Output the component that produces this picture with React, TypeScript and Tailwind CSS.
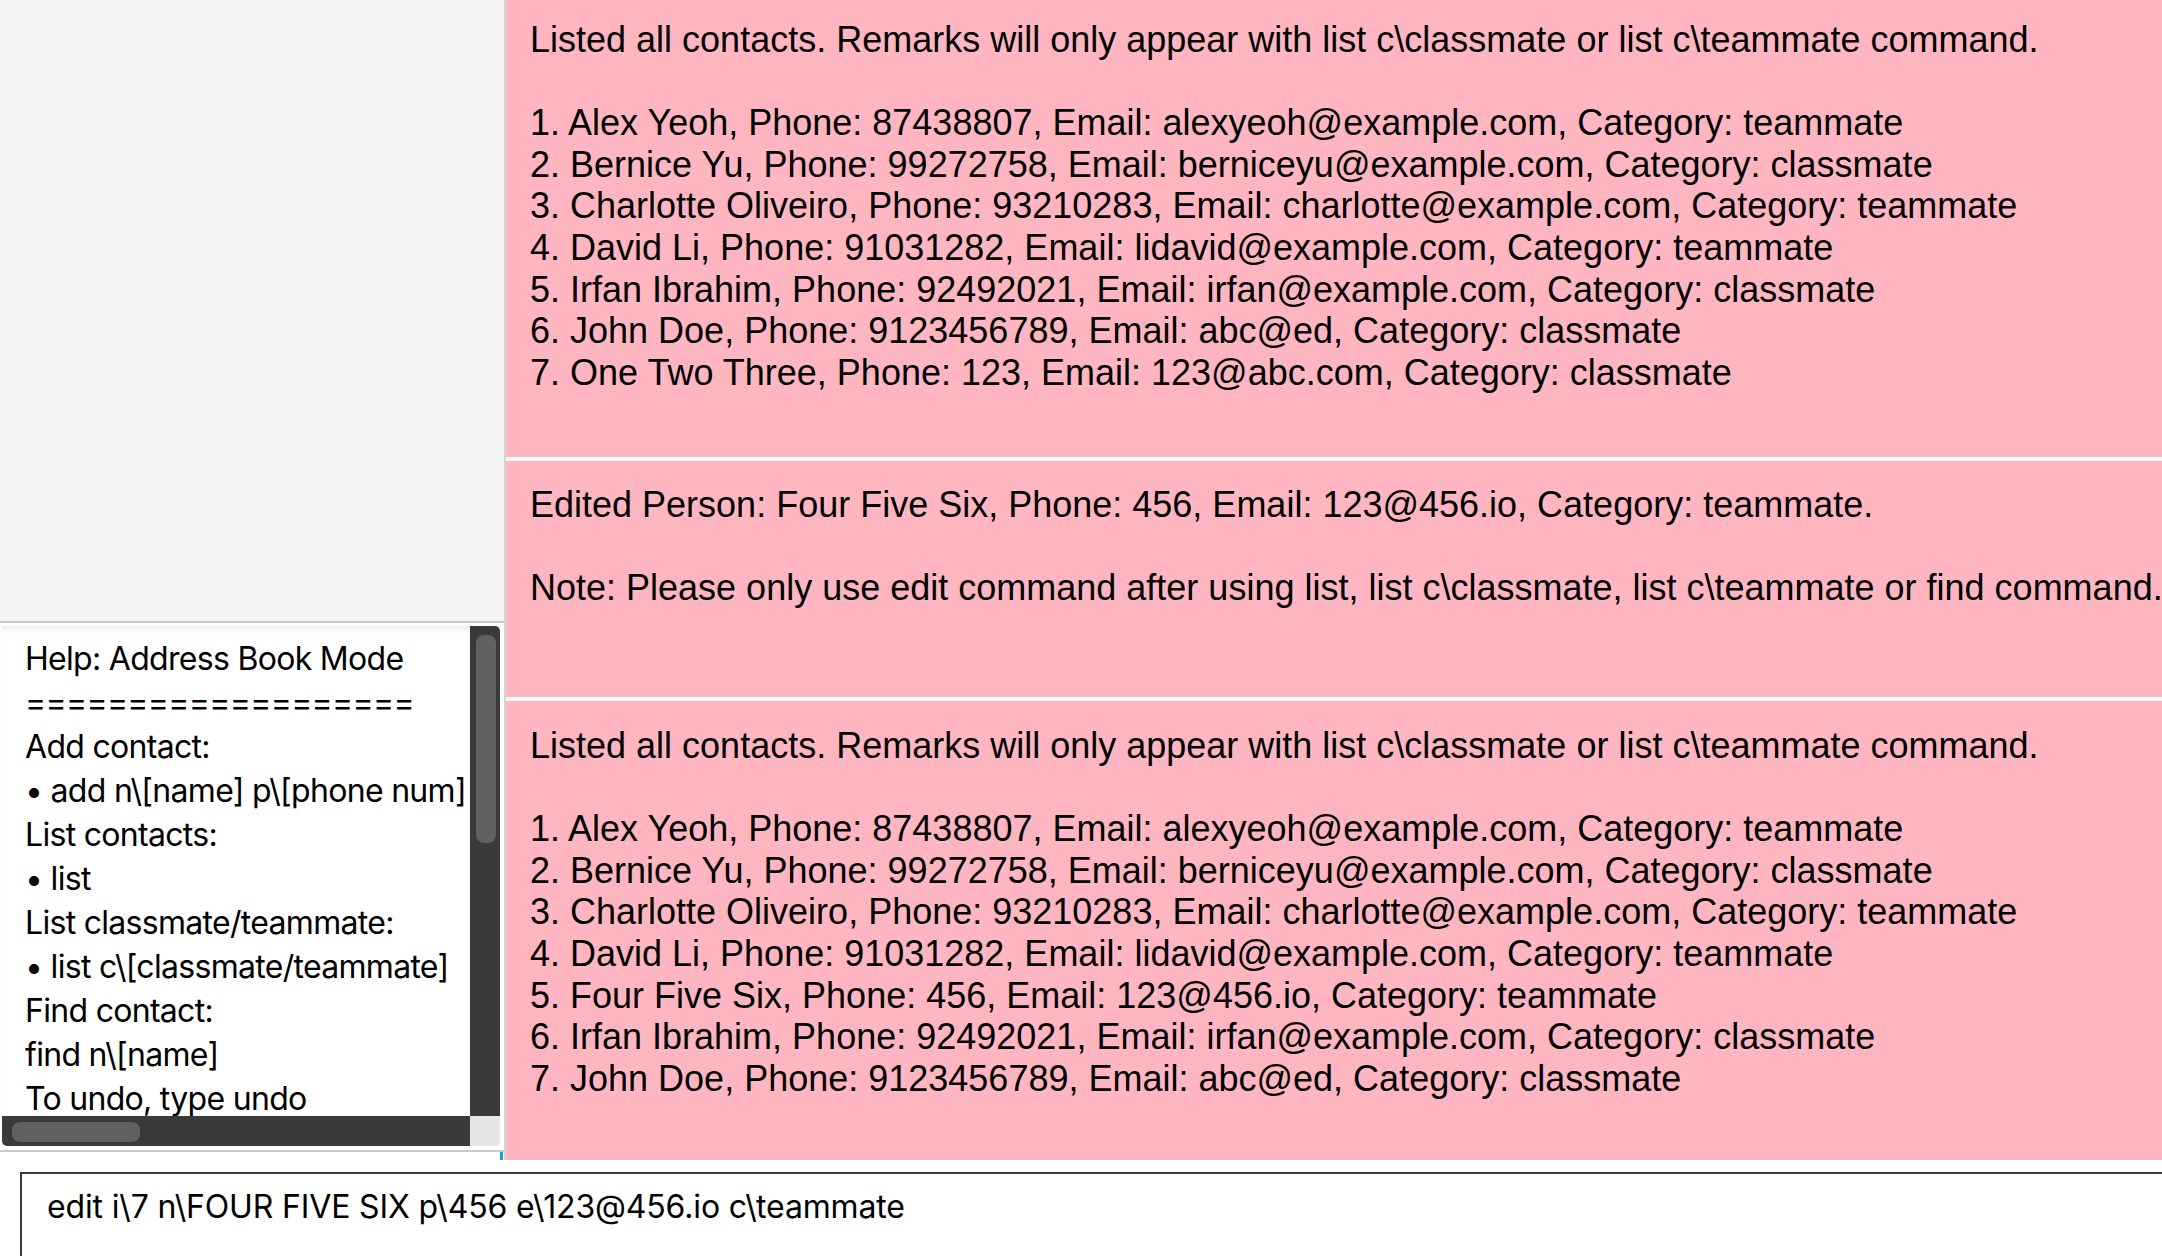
import React from "react";

const firstList = [
  "1. Alex Yeoh, Phone: 87438807, Email: alexyeoh@example.com, Category: teammate",
  "2. Bernice Yu, Phone: 99272758, Email: berniceyu@example.com, Category: classmate",
  "3. Charlotte Oliveiro, Phone: 93210283, Email: charlotte@example.com, Category: teammate",
  "4. David Li, Phone: 91031282, Email: lidavid@example.com, Category: teammate",
  "5. Irfan Ibrahim, Phone: 92492021, Email: irfan@example.com, Category: classmate",
  "6. John Doe, Phone: 9123456789, Email: abc@ed, Category: classmate",
  "7. One Two Three, Phone: 123, Email: 123@abc.com, Category: classmate",
];

const secondList = [
  "1. Alex Yeoh, Phone: 87438807, Email: alexyeoh@example.com, Category: teammate",
  "2. Bernice Yu, Phone: 99272758, Email: berniceyu@example.com, Category: classmate",
  "3. Charlotte Oliveiro, Phone: 93210283, Email: charlotte@example.com, Category: teammate",
  "4. David Li, Phone: 91031282, Email: lidavid@example.com, Category: teammate",
  "5. Four Five Six, Phone: 456, Email: 123@456.io, Category: teammate",
  "6. Irfan Ibrahim, Phone: 92492021, Email: irfan@example.com, Category: classmate",
  "7. John Doe, Phone: 9123456789, Email: abc@ed, Category: classmate",
];

const helpLines = [
  "Help: Address Book Mode",
  "===================",
  "Add contact:",
  "• add n\\[name] p\\[phone num]",
  "List contacts:",
  "• list",
  "List classmate/teammate:",
  "• list c\\[classmate/teammate]",
  "Find contact:",
  "find n\\[name]",
  "To undo, type undo",
];

const listedHeader =
  "Listed all contacts. Remarks will only appear with list c\\classmate or list c\\teammate command.";

const ResultBlock = ({ lines, className }: { lines: string[]; className: string }) => (
  <div className={`bg-[#ffb6c1] pl-[24px] overflow-hidden shrink-0 ${className}`}>
    {lines.map((line, i) => (
      <div key={i} className="h-[41.6px] leading-[41.6px] whitespace-pre text-black">
        {line || "\u00a0"}
      </div>
    ))}
  </div>
);

const HelpPanel = () => (
  <div className="h-[527px] bg-white pt-[3px] pl-[2px] pr-[4px] pb-[4px] flex flex-col">
    <div className="flex h-[490px]">
      <div
        className="flex-1 overflow-hidden pt-[11px] pl-[23px] shadow-[inset_0_6px_6px_-4px_rgba(0,0,0,0.10)]"
        style={{ fontFamily: "Inter, 'Noto Sans', sans-serif" }}
      >
        {helpLines.map((l, i) => (
          <div key={i} className="text-[32px] leading-[44px] h-[44px] whitespace-pre text-black tracking-[-0.7px]">
            {l}
          </div>
        ))}
      </div>
      <div className="w-[30px] bg-[#3a3a3a] rounded-tr-[5px] pt-[9px] pl-[6px]">
        <div className="w-[20px] h-[208px] bg-[#616161] rounded-[8px]" />
      </div>
    </div>
    <div className="flex h-[30px]">
      <div className="flex-1 bg-[#3a3a3a] rounded-bl-[5px] pt-[6px] pl-[10px]">
        <div className="w-[128px] h-[20px] bg-[#616161] rounded-[8px]" />
      </div>
      <div className="w-[30px] bg-[#e6e6e6] rounded-br-[5px]" />
    </div>
  </div>
);

export default function App() {
  return (
    <div className="w-[2162px] h-[1256px] bg-white flex flex-col overflow-hidden">
      <div className="flex h-[1160px] shrink-0">
        <div className="w-[504px] flex flex-col shrink-0">
          <div className="h-[621px] bg-[#f3f3f3]" />
          <div className="h-[2px] bg-[#c8c8c8]" />
          <HelpPanel />
          <div className="h-[2px] bg-[#c8c8c8]" />
          <div className="h-[8px] bg-white flex justify-end pr-[1px]">
            <div className="w-[3px] h-full bg-[#1ea0dc]" />
          </div>
        </div>
        <div className="w-[2px] bg-[#d4d4d4] shrink-0" />
        <div
          className="flex-1 flex flex-col bg-white text-[36px]"
          style={{ fontFamily: "'Liberation Sans', Arial, sans-serif" }}
        >
          <ResultBlock className="h-[457px] pt-[19px]" lines={[listedHeader, "", ...firstList]} />
          <div className="h-[4px] bg-white shrink-0" />
          <ResultBlock
            className="h-[236px] pt-[23px]"
            lines={[
              "Edited Person: Four Five Six, Phone: 456, Email: 123@456.io, Category: teammate.",
              "",
              "Note: Please only use edit command after using list, list c\\classmate, list c\\teammate or find command.",
            ]}
          />
          <div className="h-[4px] bg-white shrink-0" />
          <ResultBlock className="flex-1 pt-[24px]" lines={[listedHeader, "", ...secondList]} />
        </div>
      </div>
      <div className="flex-1 bg-white pt-[12px] pl-[20px]">
        <div className="h-full border-t-2 border-l-2 border-[#3a3a3a] pt-[13px] pl-[25px]">
          <div
            className="text-[32px] leading-[40px] text-black whitespace-pre tracking-[-0.15px]"
            style={{ fontFamily: "Inter, 'Noto Sans', sans-serif" }}
          >
            {"edit i\\7 n\\FOUR FIVE SIX p\\456 e\\123@456.io c\\teammate"}
          </div>
        </div>
      </div>
    </div>
  );
}
